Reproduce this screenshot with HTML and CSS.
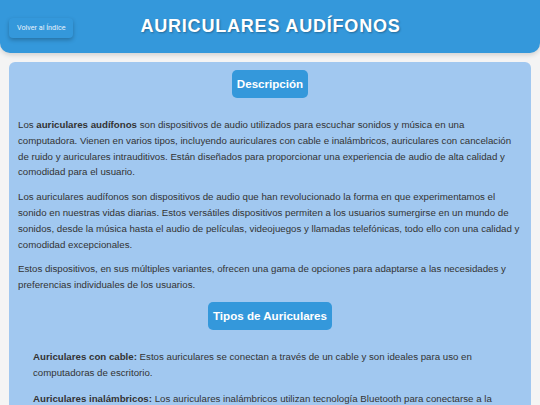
FILE: index.html
```html
<!DOCTYPE html>
<html lang="es">
<head>
<meta charset="UTF-8">
<meta name="viewport" content="width=device-width, initial-scale=1.0">
<title>Auriculares Audífonos</title>
<link rel="stylesheet" href="styles.css">
</head>
<body>

<header>
    <div class="back-wrap">
        <a href="index.html" class="back-btn">Volver al Índice</a>
    </div>
    <h1>AURICULARES AUDÍFONOS</h1>
    <div></div>
</header>

<main>
    <div class="section-title"><span>Descripción</span></div>
    <p>Los <strong>auriculares audífonos</strong> son dispositivos de audio utilizados para escuchar sonidos y música en una computadora. Vienen en varios tipos, incluyendo auriculares con cable e inalámbricos, auriculares con cancelación de ruido y auriculares intrauditivos. Están diseñados para proporcionar una experiencia de audio de alta calidad y comodidad para el usuario.</p>
    <p>Los auriculares audífonos son dispositivos de audio que han revolucionado la forma en que experimentamos el sonido en nuestras vidas diarias. Estos versátiles dispositivos permiten a los usuarios sumergirse en un mundo de sonidos, desde la música hasta el audio de películas, videojuegos y llamadas telefónicas, todo ello con una calidad y comodidad excepcionales.</p>
    <p>Estos dispositivos, en sus múltiples variantes, ofrecen una gama de opciones para adaptarse a las necesidades y preferencias individuales de los usuarios.</p>

    <div class="section-title"><span>Tipos de Auriculares</span></div>
    <ul class="types">
        <li><strong>Auriculares con cable:</strong> Estos auriculares se conectan a través de un cable y son ideales para uso en computadoras de escritorio.</li>
        <li><strong>Auriculares inalámbricos:</strong> Los auriculares inalámbricos utilizan tecnología Bluetooth para conectarse a la computadora y ofrecen libertad de movimiento.</li>
        <li><strong>Auriculares con cancelación de ruido:</strong> Reducen el ruido exterior para una experiencia más inmersiva.</li>
    </ul>
</main>

</body>
</html>
```

FILE: styles.css
```css
body {
    font-family: "Liberation Sans", Arial, sans-serif;
    background-color: #f4f4f4;
    color: #333;
    margin: 0;
    padding: 0;
}
header {
    display: grid;
    grid-template-columns: 1fr auto 1fr;
    align-items: center;
    height: 53px;
    background-color: #3498db;
    border-radius: 0 0 10px 10px;
    box-shadow: 0 2px 5px rgba(0,0,0,0.15);
}
header h1 {
    margin: 0 0 0 1px;
    font-size: 18px;
    letter-spacing: 0.8px;
    color: #fff;
    text-shadow: 1px 1px 2px rgba(0,0,0,0.3);
}
.back-wrap {
    padding-left: 9px;
}
.back-btn {
    display: inline-block;
    font-family: Roboto, sans-serif;
    font-size: 7.2px;
    line-height: 20px;
    padding: 0 8px;
    color: #e8f2fb;
    text-decoration: none;
    border-radius: 4px;
    background-color: #3498db;
    box-shadow: 0 2px 4px rgba(0,0,0,0.25);
}
main {
    margin: 9px 9px 0;
    padding: 8px 9px 10px;
    background-color: #a1c8f0;
    border-radius: 6px;
    font-size: 9.7px;
    line-height: 15.8px;
}
.section-title {
    text-align: center;
}
.section-title span {
    display: inline-block;
    padding: 7px 5px;
    font-size: 11.6px;
    line-height: 14px;
    font-weight: bold;
    color: #fff;
    background-color: #3498db;
    border-radius: 5px;
}
main p {
    margin: 0 0 9px;
}
main p:first-of-type {
    margin-top: 19px;
}
.types {
    list-style-type: none;
    margin: 19px 0 0;
    padding-left: 15px;
}
.types li {
    margin-bottom: 10px;
}
```
